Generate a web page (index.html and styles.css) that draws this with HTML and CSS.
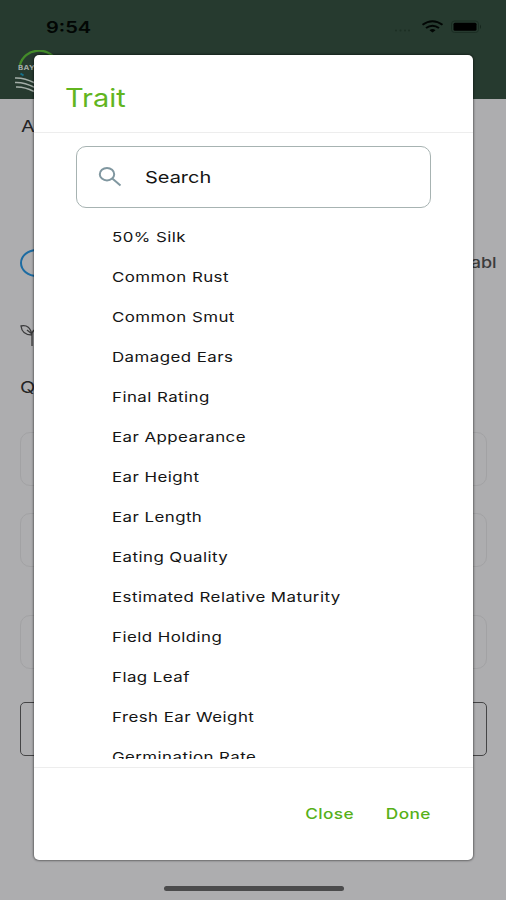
FILE: index.html
```
<!DOCTYPE html>
<html lang="en">
<head>
<meta charset="utf-8">
<title>Trait</title>
<link rel="stylesheet" href="styles.css">
</head>
<body>
<div class="screen">
  <header class="appbar">
    <div class="status">
      <span class="time">9:54</span>
      <svg class="signals" width="90" height="18" viewBox="0 0 90 18">
        <g fill="#1c2f24"><circle cx="4" cy="12.500" r="1"/><circle cx="8.500" cy="12.500" r="1"/><circle cx="13" cy="12.500" r="1"/><circle cx="17" cy="12.500" r="1"/></g>
        <g fill="none" stroke="#020604" stroke-width="2"><path d="M30.500 6.800Q40.500-.5 50.500 6.800"/><path d="M34 10Q40.500 5.300 47 10"/></g>
        <path d="M37.500 12.300Q40.500 9.800 43.500 12.300L40.500 14.500Z" fill="#020604"/>
        <rect x="59.500" y="3" width="27" height="11.500" rx="3" fill="none" stroke="#1b2d23"/>
        <rect x="61.500" y="4.800" width="23" height="8" rx="1.500" fill="#000"/>
        <path d="M88 6.500v4.500q2-2.200 0-4.500" fill="#15251c"/>
      </svg>
    </div>
    <svg class="logo" width="48" height="46" viewBox="0 0 48 46">
      <path d="M5 15C9-2 33-4 41 10" fill="none" stroke="#438b29" stroke-width="2.300"/>
      <text x="2.300" y="20.500" class="logo-text" transform="scale(1.3 1)">BAYER</text>
      <path d="M5.500 23.500l3 2" stroke="#16718a" stroke-width="2"/>
      <path d="M0 28q9-.5 20 5M0 32.500q9-.5 20 5M1 37q8-.5 18 4.500" fill="none" stroke="#a4aea8" stroke-width="1.500"/>
    </svg>
  </header>
  <main class="form">
    <div class="heading">Assessment</div>
    <div class="options"><span class="radio"></span><span class="option-label">abl</span></div>
    <svg class="plant" width="30" height="26" viewBox="0 0 30 26" fill="none" stroke="#3a3a3b" stroke-width="1.300"><path d="M12 22V12Q11 9 14 6M12 11Q2 11 1 2Q10 0 12 11M7 6L12 10"/></svg>
    <div class="question">Question</div>
    <div class="field"></div>
    <div class="field second"></div>
    <div class="field third"></div>
    <div class="field outlined"></div>
    <div class="home"></div>
  </main>
  <section class="dialog">
    <h1 class="title"><span>Trait</span></h1>
    <div class="body">
      <div class="search">
        <svg width="24" height="20" viewBox="0 0 24 20" fill="none" stroke="#8097a0" stroke-width="2"><ellipse cx="9" cy="7.200" rx="7.200" ry="6.200"/><path d="M14.300 11.500L22.500 18.500"/></svg>
        <span>Search</span>
      </div>
      <ul class="list">
        <li>50% Silk</li><li>Common Rust</li><li>Common Smut</li><li>Damaged Ears</li><li>Final Rating</li><li>Ear Appearance</li><li>Ear Height</li><li>Ear Length</li><li>Eating Quality</li><li>Estimated Relative Maturity</li><li>Field Holding</li><li>Flag Leaf</li><li>Fresh Ear Weight</li><li>Germination Rate</li>
      </ul>
    </div>
    <footer class="actions"><span class="close">Close</span><span>Done</span></footer>
  </section>
</div>
</body>
</html>
```
FILE: styles.css
```
* { box-sizing: border-box; }
body { margin: 0; font-family: Inter, "Liberation Sans", sans-serif; }
.screen { position: relative; width: 506px; height: 900px; overflow: hidden; background: #adadaf; display: flex; flex-direction: column; }
.appbar { height: 99px; flex: none; background: #263a2f; padding-top: 18px; }
.status { display: flex; justify-content: space-between; height: 18px; padding: 0 16px 0 46px; }
.signals { flex: none; margin-right: 8px; }
.time { font-size: 16px; line-height: 18px; font-weight: 600; color: #020604; transform: scaleX(1.25); transform-origin: left; }
.logo { display: block; margin: 14px 0 0 15px; }
.logo-text { font-size: 6px; font-weight: 700; fill: #a4aea8; letter-spacing: .3px; }
.form { flex: 1; display: flex; flex-direction: column; padding: 0 19px 0 20px; color: #242425; }
.heading, .question { font-size: 16px; line-height: 20px; transform: scaleX(1.25); transform-origin: left; }
.heading { margin-top: 17px; margin-left: 1px; }
.options { margin-top: 113px; height: 28px; display: flex; justify-content: space-between; align-items: center; margin-right: -10px; }
.radio { width: 34px; height: 28px; border: 2px solid #1d6ca2; border-radius: 50%; }
.option-label { font-size: 15px; font-weight: 500; color: #3c3c3d; transform: scaleX(1.2); transform-origin: right; position: relative; top: -1px; }
.plant { margin-top: 47px; }
.question { margin-top: 27px; }
.field { height: 54px; flex: none; border: 1px solid #a2a2a4; border-radius: 10px; margin-top: 35px; }
.second { margin-top: 27px; }
.third { margin-top: 48px; }
.outlined { border: 1.500px solid #454546; border-radius: 5px; margin-top: 33px; }
.home { width: 180px; height: 5px; flex: none; border-radius: 3px; background: #4b4b4c; margin: 130px 0 0 144px; }
.dialog { position: absolute; left: 34px; top: 55px; width: 439px; height: 805px; background: #fff; border-radius: 5px; box-shadow: 0 0 2px 1px rgba(0,0,0,.4); display: flex; flex-direction: column; color: #141414; }
.title { margin: 0; height: 78px; flex: none; border-bottom: 1px solid #ededed; padding: 28px 32px 0; font-size: 25px; line-height: 30px; font-weight: 400; color: #62b51f; }
.title span { display: inline-block; transform: scaleX(1.16); transform-origin: left; margin-left: -1px; }
.body { height: 626px; flex: none; overflow: hidden; padding: 13px 42px 0; }
.search { height: 62px; border: 1px solid #a7b3b2; border-radius: 10px; display: flex; align-items: center; padding-left: 21px; }
.search span { margin-left: 23px; font-size: 16.500px; transform: scaleX(1.21); transform-origin: left; }
.list { list-style: none; margin: 9px 0 0 36px; padding: 0; width: 260px; transform: scaleX(1.25); transform-origin: left; font-size: 13.500px; letter-spacing: .35px; line-height: 40px; white-space: nowrap; }
.actions { border-top: 1px solid #ededed; margin-top: 8px; flex: 1; display: flex; justify-content: flex-end; padding: 36px 42px 0; gap: 39px; font-size: 14.500px; line-height: 20px; letter-spacing: .3px; font-weight: 500; color: #57b019; }
.actions span { transform: scaleX(1.19); transform-origin: right; }
```
